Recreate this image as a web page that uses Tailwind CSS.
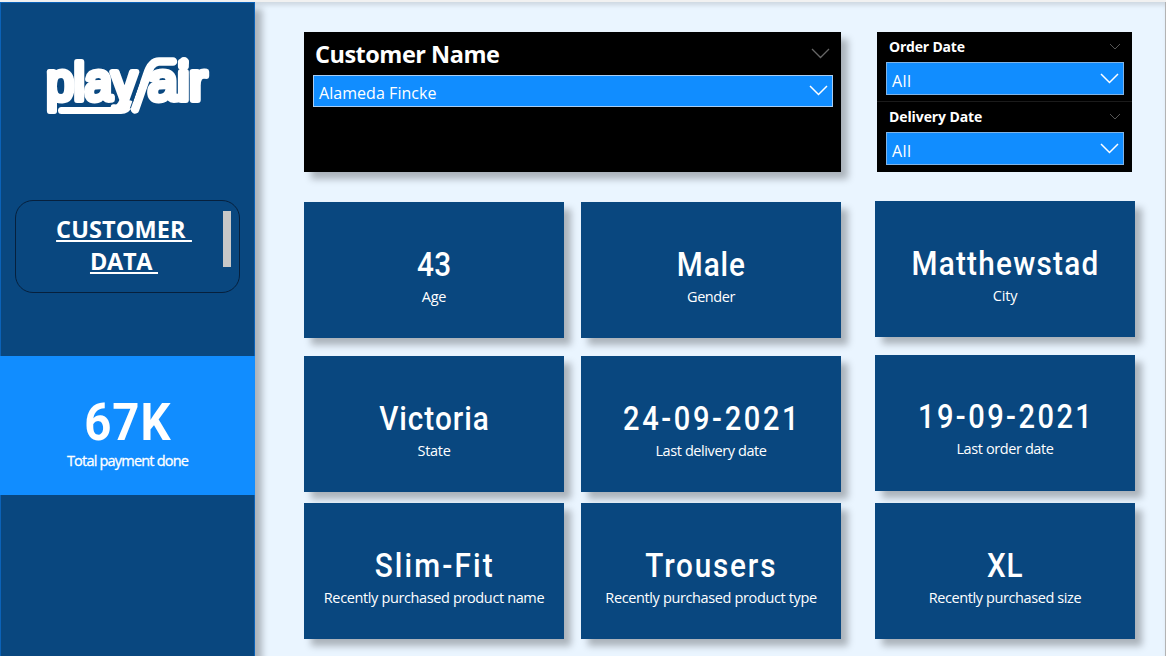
<!DOCTYPE html>
<html lang="en">
<head>
<meta charset="utf-8">
<title>Customer data</title>
<script src="https://cdn.jsdelivr.net/npm/@tailwindcss/browser@4"></script>
</head>
<body class="flex h-[656px] w-[1166px] flex-col overflow-hidden bg-[#f1f1f1] font-['Open_Sans','Noto_Sans',sans-serif] text-white">
<div class="mt-[2px] flex h-[654px] border-r border-[#b3b3b3] bg-[#eaf5ff] shadow-[inset_0_5px_5px_-2px_rgba(0,0,0,0.13)]">

  <aside class="flex w-[255px] shrink-0 flex-col border border-b-0 border-[#0b62b8] bg-[#09477f] shadow-[7px_7px_7px_rgba(0,0,0,0.27)]">
    <svg class="ml-[39px] mt-[47px] h-[72px] w-[180px] shrink-0" viewBox="40 50 180 72" fill="none" stroke="#fff" stroke-linecap="round" stroke-linejoin="round" role="img" aria-label="playfair">
      <g font-family="Liberation Sans, sans-serif" font-size="51" fill="#fff" stroke-width="6">
        <text x="46.500" y="100" textLength="90" lengthAdjust="spacingAndGlyphs">play</text>
        <text x="148" y="100" textLength="59" lengthAdjust="spacingAndGlyphs">air</text>
      </g>
      <path stroke-width="7" d="M61.500 110.500H121Q127 110.500 130 104"/>
      <path stroke-width="8.500" d="M135 109.500L147 75Q151 61.500 159 61.500H173"/>
      <path stroke="#09477f" stroke-width="1" d="M130.500 108L139.500 82"/>
      <circle cx="184" cy="62" r="2.500" stroke-width="5"/>
    </svg>

    <section class="ml-[14px] mt-[78px] flex h-[93px] w-[225px] shrink-0 rounded-[18px] border border-[#06203d] pt-[10px]">
      <h1 class="mt-[2px] flex flex-1 flex-col items-center pl-[9px] text-[23.5px] leading-[32px] font-bold whitespace-pre decoration-2 underline-offset-[2px]"><span class="tracking-[0.1px] underline">CUSTOMER </span><span class="tracking-[-0.3px] underline">DATA </span></h1>
      <div class="mr-[8px] h-[56px] w-[8px] bg-[#c8c8c8]"></div>
    </section>

    <section class="-mx-px mt-[63px] flex h-[139px] shrink-0 flex-col items-center bg-[#118dff] pt-[39px]">
      <p class="scale-x-[0.91] font-[Roboto] text-[52px] leading-[56px] font-bold tracking-[1px]">67K</p>
      <p class="text-[14.5px] leading-[20px] tracking-[-0.8px] [-webkit-text-stroke:0.3px_white]">Total payment done</p>
    </section>
  </aside>

  <main class="flex items-start gap-[34px] pt-[30px] pl-[49px]">
    <div class="flex w-[537px] flex-col">
      <section class="flex h-[140px] flex-col bg-black pt-[7px] pr-[8px] pl-[9px] shadow-[7px_7px_7px_rgba(0,0,0,0.27)]">
        <header class="flex h-[36px] items-start justify-between pr-[3px] pl-[2px]">
          <h2 class="mt-[-1px] text-[23.5px] leading-[32px] font-bold tracking-[-0.500px]">Customer Name</h2>
          <svg class="mt-[9px] h-[11px] w-[19px]" viewBox="0 0 19 11" fill="none" stroke="#666" stroke-width="1.3"><path d="M1 1l8.500 8.500L18 1"/></svg>
        </header>
        <div class="flex h-[32px] items-center justify-between border border-[#a9cdf2] bg-[#118dff] pr-[4px] pl-[5px]">
          <span class="pt-[4px] text-[16px] tracking-[0.05px]">Alameda Fincke</span>
          <svg class="mb-[2px] h-[11px] w-[19px]" viewBox="0 0 19 11" fill="none" stroke="#fff" stroke-width="1.5"><path d="M1 1l8.500 8.500L18 1"/></svg>
        </div>
      </section>

      <div class="mt-[30px] grid grid-cols-[260px_260px] grid-rows-[136px_136px_136px] gap-x-[17px] text-center *:flex *:flex-col *:items-center *:bg-[#09477f] *:pt-[43px] *:shadow-[7px_7px_7px_rgba(0,0,0,0.27)]">
        <article><p class="scale-x-[0.9] font-[Roboto] text-[33px] leading-[40px] font-medium tracking-[0.5px]">43</p><p class="mt-[2px] text-[14.500px] leading-[20px] tracking-[-0.2px]">Age</p></article>
        <article><p class="scale-x-[0.9] font-[Roboto] text-[33px] leading-[40px] font-medium tracking-[1px]">Male</p><p class="mt-[2px] text-[14.500px] leading-[20px] tracking-[-0.45px]">Gender</p></article>
        <article class="mt-[18px] mb-[-18px]"><p class="scale-x-[0.9] font-[Roboto] text-[33px] leading-[40px] font-medium tracking-[1.100px]">Victoria</p><p class="mt-[2px] text-[14.500px] leading-[20px] tracking-[-0.3px]">State</p></article>
        <article class="mt-[18px] mb-[-18px]"><p class="scale-x-[0.88] pl-[2px] font-[Roboto] text-[33px] leading-[40px] font-medium tracking-[3px]">24-09-2021</p><p class="mt-[2px] text-[14.500px] leading-[20px] tracking-[-0.4px]">Last delivery date</p></article>
        <article class="mt-[29px] mb-[-29px]"><p class="scale-x-[0.9] pl-px font-[Roboto] text-[33px] leading-[40px] font-medium tracking-[2.400px]">Slim-Fit</p><p class="mt-[2px] text-[14.500px] leading-[20px] tracking-[-0.37px]">Recently purchased product name</p></article>
        <article class="mt-[29px] mb-[-29px]"><p class="scale-x-[0.9] pl-px font-[Roboto] text-[33px] leading-[40px] font-medium tracking-[2px]">Trousers</p><p class="mt-[2px] text-[14.500px] leading-[20px] tracking-[-0.37px]">Recently purchased product type</p></article>
      </div>
    </div>

    <div class="flex w-[260px] flex-col">
      <section class="ml-[2px] h-[140px] w-[255px] bg-black">
        <div class="h-[70px] border-b border-[#1b1b1b] pt-[4px] pr-[8px] pl-[9px]">
          <header class="flex h-[26px] items-start justify-between pr-[3px] pl-[3px]">
            <h2 class="text-[14px] leading-[22px] font-bold tracking-[-0.2px]">Order Date</h2>
            <svg class="mt-[7px] h-[7px] w-[12px]" viewBox="0 0 12 7" fill="none" stroke="#555"><path d="M1 1l5 5 5-5"/></svg>
          </header>
          <div class="flex h-[33px] items-center justify-between border border-[#7fb4e8] bg-[#118dff] pr-[4px] pl-[5px]">
            <span class="pt-[4px] text-[16px] tracking-[0.4px]">All</span>
            <svg class="h-[11px] w-[19px]" viewBox="0 0 19 11" fill="none" stroke="#fff" stroke-width="1.5"><path d="M1 1l8.500 8.500L18 1"/></svg>
          </div>
        </div>
        <div class="h-[70px] pt-[4px] pr-[8px] pl-[9px]">
          <header class="flex h-[26px] items-start justify-between pr-[3px] pl-[3px]">
            <h2 class="text-[14px] leading-[22px] font-bold tracking-[-0.1px]">Delivery Date</h2>
            <svg class="mt-[7px] h-[7px] w-[12px]" viewBox="0 0 12 7" fill="none" stroke="#555"><path d="M1 1l5 5 5-5"/></svg>
          </header>
          <div class="flex h-[33px] items-center justify-between border border-[#7fb4e8] bg-[#118dff] pr-[4px] pl-[5px]">
            <span class="pt-[4px] text-[16px] tracking-[0.4px]">All</span>
            <svg class="h-[11px] w-[19px]" viewBox="0 0 19 11" fill="none" stroke="#fff" stroke-width="1.5"><path d="M1 1l8.500 8.500L18 1"/></svg>
          </div>
        </div>
      </section>

      <div class="mt-[29px] flex flex-col text-center *:flex *:h-[136px] *:flex-col *:items-center *:bg-[#09477f] *:pt-[43px] *:shadow-[7px_7px_7px_rgba(0,0,0,0.27)]">
        <article><p class="scale-x-[0.9] font-[Roboto] text-[33px] leading-[40px] font-medium tracking-[1.400px]">Matthewstad</p><p class="mt-[2px] text-[14.500px] leading-[20px] tracking-[-0.2px]">City</p></article>
        <article class="mt-[17.500px]"><p class="mt-[-1px] scale-x-[0.88] pl-[2px] font-[Roboto] text-[33px] leading-[40px] font-medium tracking-[2.800px]">19-09-2021</p><p class="mt-[2px] text-[14.500px] leading-[20px] tracking-[-0.4px]">Last order date</p></article>
        <article class="mt-[12.500px]"><p class="scale-x-[0.9] font-[Roboto] text-[33px] leading-[40px] font-medium tracking-[0.8px]">XL</p><p class="mt-[2px] text-[14.500px] leading-[20px] tracking-[-0.4px]">Recently purchased size</p></article>
      </div>
    </div>
  </main>
</div>
</body>
</html>
